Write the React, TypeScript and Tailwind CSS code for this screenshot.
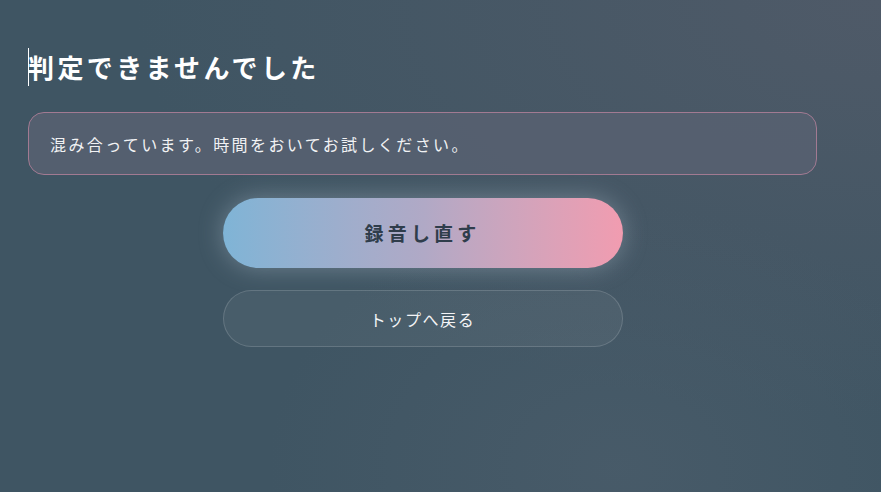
export default function App() {
  return (
    <div
      className="relative w-[881px] h-[492px] overflow-hidden bg-[#3f5563] text-white"
      style={{ fontFamily: '"Noto Sans CJK JP", "Noto Sans", sans-serif' }}
    >
      {/* background tint */}
      <div className="absolute inset-0 bg-[radial-gradient(ellipse_at_top_right,#4f5a68_0%,rgba(79,90,104,0)_60%)]" />
      <div className="absolute inset-0 bg-[radial-gradient(ellipse_at_70%_95%,rgba(80,96,110,0.5)_0%,rgba(80,96,110,0)_40%)]" />

      <div className="relative flex flex-col w-[789px] ml-[28px] pt-[46px]">
        {/* Title with caret */}
        <div className="relative flex items-center h-[42px]">
          <span className="absolute left-0 top-[2px] w-px h-[38px] bg-white" />
          <h1 className="text-[26px] font-bold tracking-[0.13em] leading-none text-white">
            判定できませんでした
          </h1>
        </div>

        {/* Error message */}
        <div className="mt-[24px] h-[63px] flex items-center px-[21px] rounded-[16px] border border-[#a27a92] bg-[#566170]/90">
          <p className="text-[16px] tracking-[0.15em] text-[#f1f2f4]">
            混み合っています。時間をおいてお試しください。
          </p>
        </div>

        {/* Actions */}
        <div className="flex flex-col items-center gap-[22px] mt-[23px]">
          <button className="w-[400px] h-[70px] rounded-full bg-gradient-to-r from-[#7fb4d6] via-[#b0a9c6] to-[#f19cb0] shadow-[0_0_24px_rgba(200,215,230,0.35)] text-[#2f3d4b] text-[19px] font-bold tracking-[0.22em]">
            録音し直す
          </button>
          <button className="w-[400px] h-[57px] rounded-full border border-white/15 bg-white/5 text-[16px] tracking-[0.1em] text-[#f3f4f6]">
            トップへ戻る
          </button>
        </div>
      </div>
    </div>
  )
}
